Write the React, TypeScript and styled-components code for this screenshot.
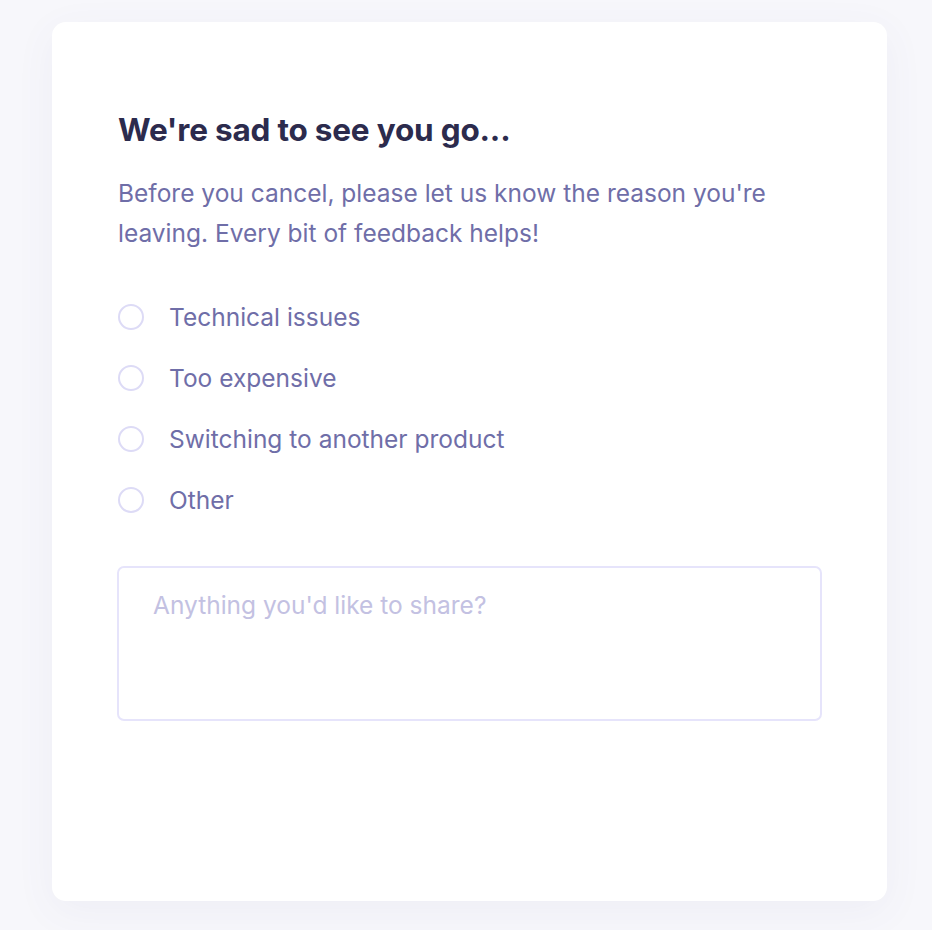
import styled, { createGlobalStyle } from "styled-components";

const Global = createGlobalStyle`
  html, body {
    margin: 0;
    padding: 0;
    background: #f7f7fb;
  }
  * {
    box-sizing: border-box;
  }
`;

const Page = styled.div`
  width: 932px;
  height: 930px;
  padding: 22px 45px 29px 52px;
  font-family: Inter, "Liberation Sans", sans-serif;
`;

const Card = styled.div`
  width: 835px;
  height: 879px;
  background: #ffffff;
  border-radius: 14px;
  box-shadow: 0 10px 40px rgba(90, 90, 160, 0.06);
  padding: 89px 65px 0 66px;
`;

const Title = styled.h1`
  margin: 0;
  font-size: 31.5px;
  font-weight: 700;
  letter-spacing: -0.2px;
  color: #2c2b4d;
  line-height: 38px;
`;

const Lead = styled.p`
  margin: 24px 0 0;
  font-size: 24.5px;
  line-height: 40px;
  color: #6f6ea8;
`;

const Options = styled.div`
  margin-top: 50px;
  display: flex;
  flex-direction: column;
  gap: 33px;
`;

const Option = styled.label`
  display: flex;
  align-items: center;
  gap: 25px;
  height: 28px;
  font-size: 24.5px;
  color: #6f6ea8;
  cursor: pointer;
`;

const Radio = styled.span`
  width: 26px;
  height: 26px;
  border-radius: 50%;
  border: 2px solid #dddbf6;
  flex-shrink: 0;
`;

const Notes = styled.textarea`
  display: block;
  margin-top: 52px;
  margin-left: -1px;
  width: 705px;
  height: 155px;
  border: 2px solid #e6e4fb;
  border-radius: 7px;
  padding: 22px 34px;
  font-family: inherit;
  font-size: 24.5px;
  color: #6f6ea8;
  resize: none;
  outline: none;
  &::placeholder {
    color: #c3c1e2;
  }
`;

const reasons = [
  "Technical issues",
  "Too expensive",
  "Switching to another product",
  "Other",
];

export default function App() {
  return (
    <Page>
      <Global />
      <Card>
        <Title>We're sad to see you go...</Title>
        <Lead>
          Before you cancel, please let us know the reason you're
          <br />
          leaving. Every bit of feedback helps!
        </Lead>
        <Options>
          {reasons.map((r) => (
            <Option key={r}>
              <Radio />
              {r}
            </Option>
          ))}
        </Options>
        <Notes placeholder="Anything you'd like to share?" />
      </Card>
    </Page>
  );
}
